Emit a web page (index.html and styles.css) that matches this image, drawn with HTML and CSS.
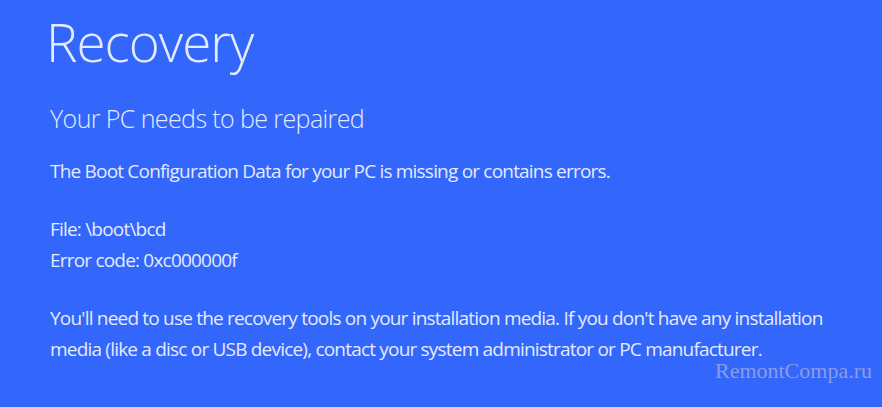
FILE: index.html
```html
<!DOCTYPE html>
<html lang="en">
<head>
<meta charset="utf-8">
<title>Recovery</title>
<link rel="stylesheet" href="styles.css">
</head>
<body>
<main class="screen">
  <h1 class="title">Recovery</h1>
  <h2 class="subtitle">Your PC needs to be repaired</h2>
  <p class="text lead">The Boot Configuration Data for your PC is missing or contains errors.</p>
  <div class="details">
    <p class="text">File: \boot\bcd</p>
    <p class="text">Error code: 0xc000000f</p>
  </div>
  <p class="text para">You'll need to use the recovery tools on your installation media. If you don't have any installation media (like a disc or USB device), contact your system administrator or PC manufacturer.</p>
  <div class="watermark">RemontCompa.ru</div>
</main>
</body>
</html>
```
FILE: styles.css
```css
html, body {
  margin: 0;
  padding: 0;
}
body {
  background: #3366fb;
  width: 882px;
  height: 407px;
  overflow: hidden;
}
.screen {
  position: relative;
  height: 407px;
  box-sizing: border-box;
  padding: 10px 0 0 50px;
  display: flex;
  flex-direction: column;
  color: #e4ebff;
  font-family: "Open Sans", "Noto Sans", sans-serif;
}
.title {
  margin: 0 0 0 -4px;
  font-size: 53px;
  font-weight: 300;
  line-height: 64px;
  letter-spacing: -1px;
}
.subtitle {
  margin: 29px 0 0 0;
  font-size: 25px;
  font-weight: 300;
  line-height: 30px;
  letter-spacing: -0.6px;
}
.text {
  margin: 0;
  font-size: 19px;
  font-weight: 400;
  line-height: 31px;
  letter-spacing: -0.8px;
}
.lead {
  margin-top: 23px;
}
.details {
  margin-top: 27px;
}
.para {
  margin-top: 27px;
  width: 790px;
}
.watermark {
  position: absolute;
  right: 10px;
  top: 358px;
  font-family: "Liberation Serif", serif;
  font-size: 22px;
  color: #8a9ce8;
}
```
